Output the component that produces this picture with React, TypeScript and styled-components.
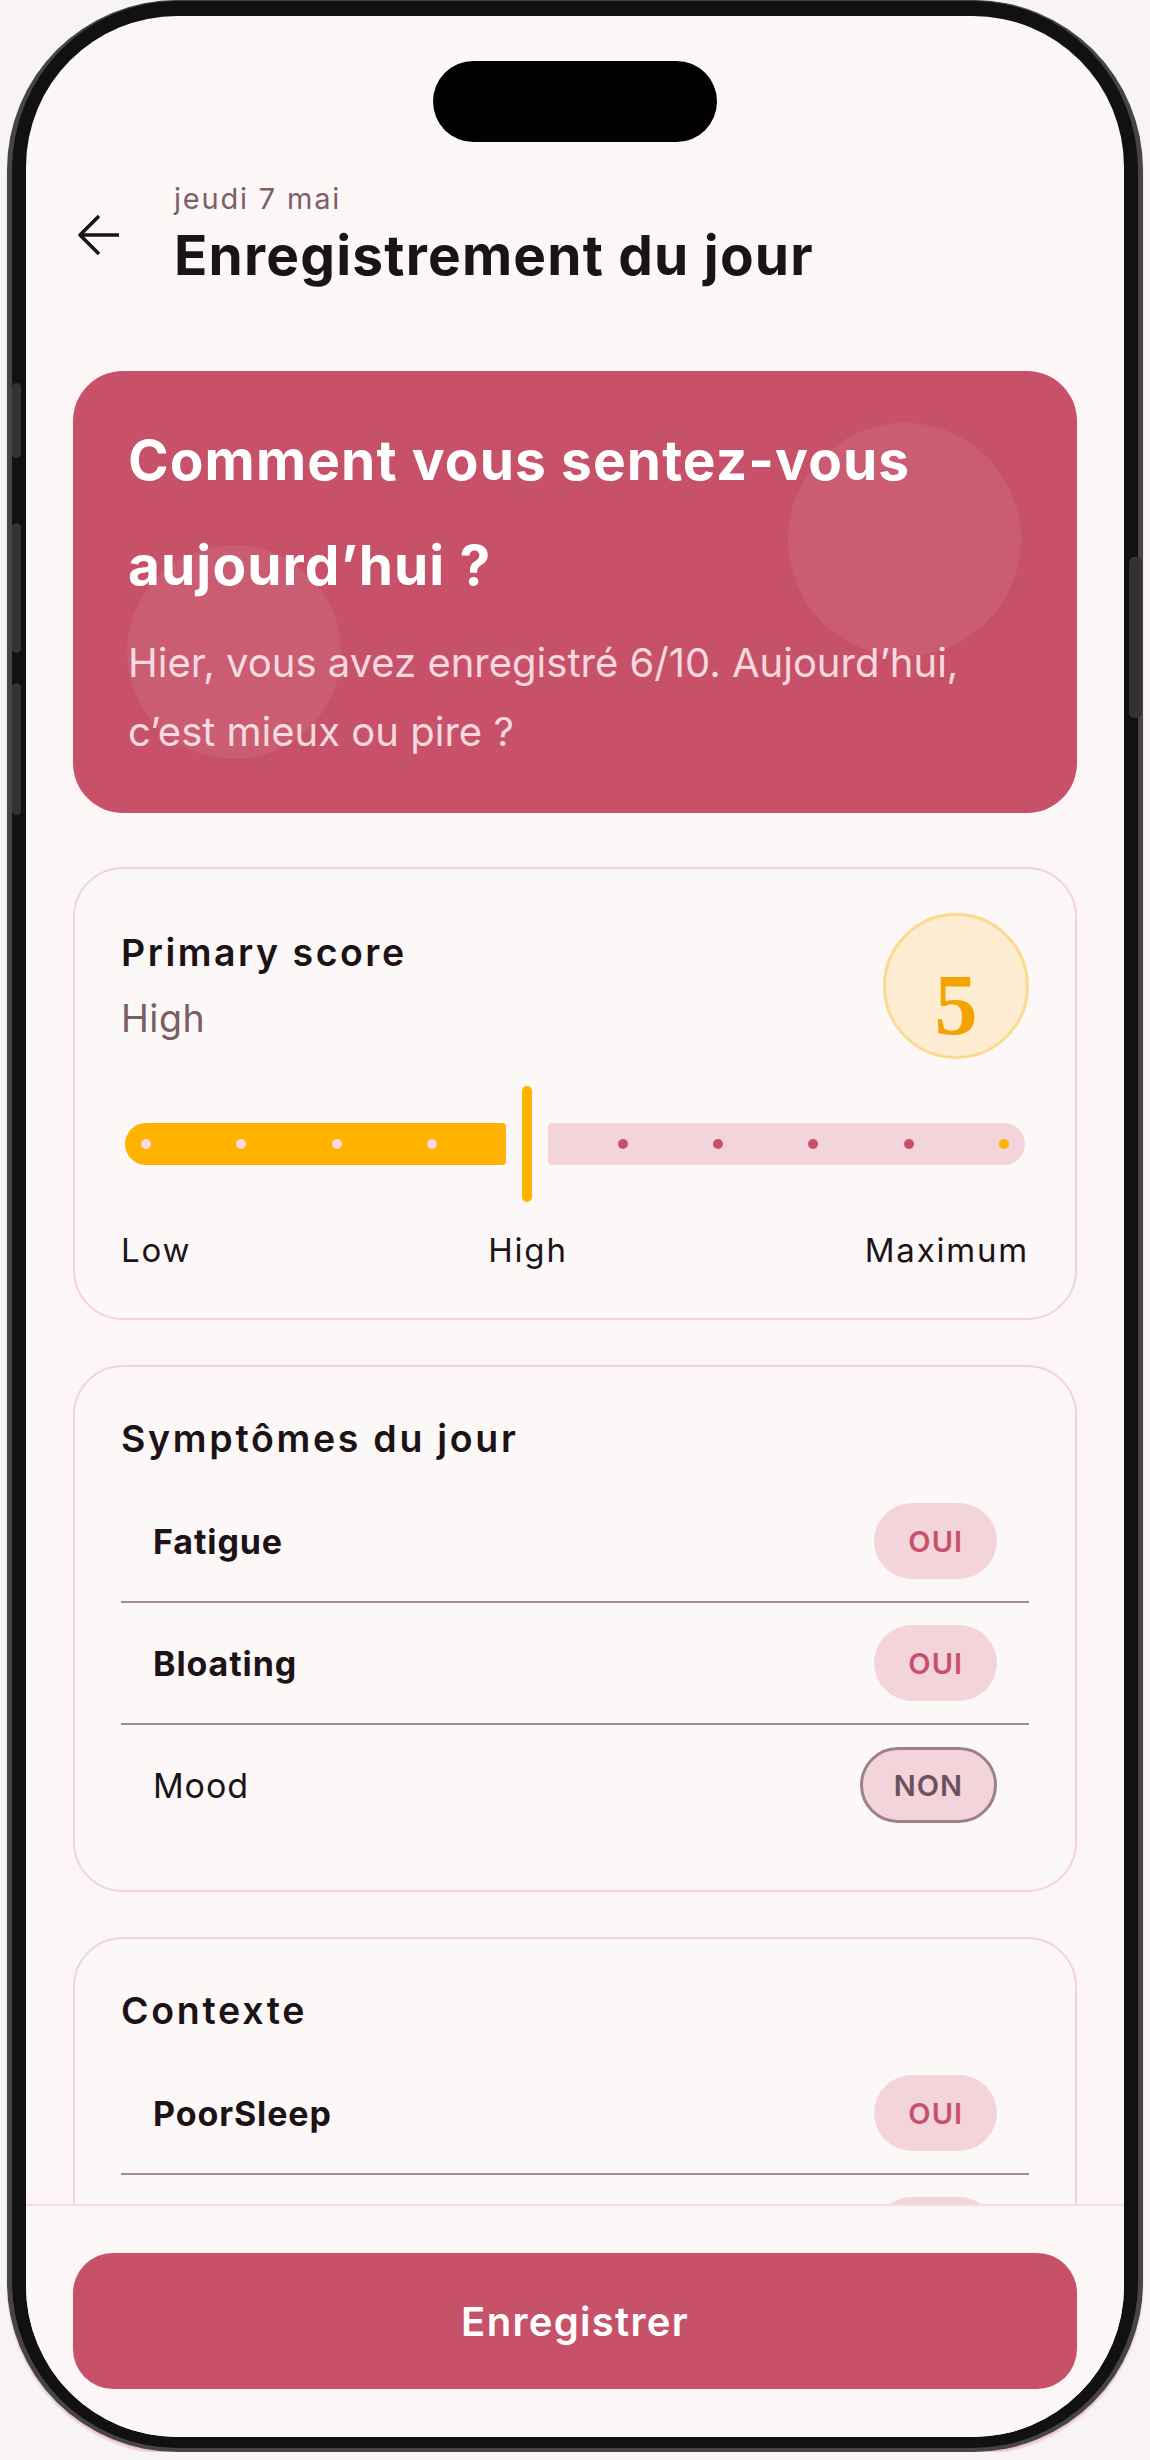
import styled, { createGlobalStyle } from "styled-components";

const GlobalStyle = createGlobalStyle`
  * { box-sizing: border-box; }
  body {
    margin: 0;
    background: #f8f4f5;
    font-family: Inter, "Noto Sans", sans-serif;
  }
`;

const Phone = styled.div`
  position: relative;
  width: 1136px;
  height: 2452px;
  margin: 0 auto;
  padding: 15px 14px 11px;
  background: #111;
  border: 5px solid #454545;
  border-top-width: 1px;
  border-bottom-width: 4px;
  border-radius: 170px;
  box-shadow: 0 3px 2px rgba(226, 160, 178, 0.55);
`;

const SideButton = styled.div<{ $side: "left" | "right"; $top: number; $h: number }>`
  position: absolute;
  ${(p) => (p.$side === "left" ? "left: 0; width: 9px;" : "right: -4px; width: 13px;")}
  top: ${(p) => p.$top}px;
  height: ${(p) => p.$h}px;
  background: #333;
  border-radius: 5px;
`;

const Screen = styled.div`
  position: relative;
  width: 100%;
  height: 100%;
  border-radius: 151px;
  overflow: hidden;
  background: #fcf6f7;
  display: flex;
  flex-direction: column;
`;

const Island = styled.div`
  position: absolute;
  top: 45px;
  left: 50%;
  transform: translateX(-50%);
  width: 284px;
  height: 81px;
  border-radius: 41px;
  background: #000;
  z-index: 5;
`;

const Scroll = styled.div`
  flex: 1;
  min-height: 0;
  overflow: hidden;
  padding: 165px 47px 0;
`;

const Header = styled.header`
  display: flex;
  align-items: center;
  gap: 49px;
`;

const BackButton = styled.button`
  width: 52px;
  height: 52px;
  padding: 0;
  border: none;
  background: none;
  display: flex;
  align-items: center;
  justify-content: center;
`;

const HeaderText = styled.div`
  display: flex;
  flex-direction: column;
`;

const DateLine = styled.span`
  font-size: 29px;
  line-height: 36px;
  letter-spacing: 1.8px;
  color: #7d5f69;
`;

const Title = styled.h1`
  margin: 5px 0 0;
  font-size: 55px;
  line-height: 66px;
  font-weight: 700;
  letter-spacing: 1.2px;
  color: #1c1317;
`;

const Stack = styled.div`
  display: flex;
  flex-direction: column;
  gap: 45px;
  margin-top: 83px;
`;

const Hero = styled.section`
  position: relative;
  overflow: hidden;
  background: #c75169;
  border-radius: 50px;
  padding: 37px 55px 47px;
  margin-bottom: 9px;
  color: #fff;
`;

const Blob = styled.div<{ $size: number; $top: number; $left: number }>`
  position: absolute;
  width: ${(p) => p.$size}px;
  height: ${(p) => p.$size}px;
  top: ${(p) => p.$top}px;
  left: ${(p) => p.$left}px;
  border-radius: 50%;
  background: rgba(255, 255, 255, 0.07);
`;

const HeroTitle = styled.h2`
  position: relative;
  margin: 0;
  font-size: 55px;
  line-height: 105px;
  font-weight: 700;
  letter-spacing: 1.1px;
`;

const HeroText = styled.p`
  position: relative;
  margin: 10px 0 0;
  font-size: 40px;
  line-height: 69px;
  color: rgba(255, 236, 240, 0.88);
`;

const Card = styled.section`
  background: #fdf8f8;
  border: 2px solid #f2d3da;
  border-radius: 50px;
  padding: 44px 46px 45px;
`;

const ScoreHead = styled.div`
  display: flex;
  justify-content: space-between;
  align-items: center;
`;

const CardTitle = styled.h3`
  margin: 0;
  font-size: 37.5px;
  line-height: 48px;
  font-weight: 600;
  letter-spacing: 2.5px;
  color: #1c1317;
`;

const ScoreLevel = styled.div`
  margin-top: 18px;
  font-size: 37.5px;
  line-height: 48px;
  letter-spacing: 0.5px;
  color: #7b5d67;
`;

const ScoreBadge = styled.div`
  width: 146px;
  height: 146px;
  border-radius: 50%;
  background: #fdebd2;
  border: 3px solid #fbd98f;
  padding-top: 38px;
  display: flex;
  align-items: center;
  justify-content: center;
  font-family: "Liberation Serif", serif;
  font-weight: 700;
  font-size: 86px;
  line-height: 1;
  color: #f5a300;
`;

const Track = styled.div`
  position: relative;
  height: 116px;
  margin: 27px 4px 0;
  display: flex;
  align-items: center;
`;

const Filled = styled.div`
  height: 42px;
  background: #ffb300;
  border-radius: 21px 4px 4px 21px;
`;

const ThumbSlot = styled.div`
  width: 42px;
  height: 100%;
  display: flex;
  justify-content: center;
`;

const Thumb = styled.div`
  width: 10px;
  height: 100%;
  border-radius: 5px;
  background: #ffb300;
`;

const Empty = styled.div`
  flex: 1;
  height: 42px;
  background: #f3d4db;
  border-radius: 4px 21px 21px 4px;
`;

const Dot = styled.span<{ $color: string }>`
  position: absolute;
  top: 50%;
  width: 10px;
  height: 10px;
  margin: -5px 0 0 -5px;
  border-radius: 50%;
  background: ${(p) => p.$color};
`;

const Scale = styled.div`
  display: flex;
  justify-content: space-between;
  margin-top: 25px;
  font-size: 33px;
  line-height: 46px;
  letter-spacing: 1.8px;
  color: #1c1317;
`;

const SectionTitle = styled(CardTitle)`
  margin: 0 0 14px;
  line-height: 56px;
  letter-spacing: 2.7px;
`;

const Row = styled.div`
  display: flex;
  justify-content: space-between;
  align-items: center;
  padding: 22px 32px;
  border-bottom: 2px solid #a38a95;
  &:last-child {
    border-bottom: none;
  }
`;

const RowLabel = styled.span<{ $on: boolean }>`
  font-size: 34px;
  font-weight: ${(p) => (p.$on ? 700 : 400)};
  letter-spacing: 0.9px;
  color: #1c1317;
`;

const Pill = styled.span<{ $on: boolean }>`
  height: 76px;
  padding: 0 31px;
  display: inline-flex;
  align-items: center;
  border-radius: 38px;
  border: 3px solid ${(p) => (p.$on ? "transparent" : "#9d808c")};
  background: #f3d4db;
  font-size: 29px;
  font-weight: 600;
  letter-spacing: 1px;
  color: ${(p) => (p.$on ? "#c75169" : "#6b5260")};
`;

const BottomBar = styled.div`
  flex-shrink: 0;
  border-top: 2px solid #f3dde2;
  background: #fcf6f7;
  padding: 47px 47px 48px;
`;

const SaveButton = styled.button`
  width: 100%;
  height: 136px;
  border: none;
  border-radius: 40px;
  background: #c75169;
  color: #fff;
  font-family: Inter, "Noto Sans", sans-serif;
  font-size: 40px;
  font-weight: 600;
  letter-spacing: 1.3px;
`;

const symptoms = [
  { name: "Fatigue", on: true },
  { name: "Bloating", on: true },
  { name: "Mood", on: false },
];

const context = [
  { name: "PoorSleep", on: true },
  { name: "Stress", on: true },
];

function ToggleRow({ name, on }: { name: string; on: boolean }) {
  return (
    <Row>
      <RowLabel $on={on}>{name}</RowLabel>
      <Pill $on={on}>{on ? "OUI" : "NON"}</Pill>
    </Row>
  );
}

function ScoreSlider({ value }: { value: number }) {
  const steps = 10;
  const idx = value - 1;
  const pos = (i: number) => `calc(21px + (100% - 42px) * ${i} / ${steps - 1})`;
  return (
    <Track>
      <Filled style={{ width: `calc((100% - 42px) * ${idx} / ${steps - 1})` }} />
      <ThumbSlot>
        <Thumb />
      </ThumbSlot>
      <Empty />
      {Array.from({ length: steps }).map((_, i) =>
        i === idx ? null : (
          <Dot
            key={i}
            style={{ left: pos(i) }}
            $color={i < idx ? "#fcd9e3" : i === steps - 1 ? "#ffb300" : "#c75169"}
          />
        )
      )}
    </Track>
  );
}

export default function App() {
  return (
    <>
      <GlobalStyle />
      <Phone>
        <SideButton $side="left" $top={382} $h={75} />
        <SideButton $side="left" $top={522} $h={130} />
        <SideButton $side="left" $top={682} $h={132} />
        <SideButton $side="right" $top={556} $h={161} />
        <Screen>
          <Island />
          <Scroll>
            <Header>
              <BackButton aria-label="Retour">
                <svg width="44" height="42" viewBox="0 0 44 42" fill="none">
                  <path
                    d="M42 21H3M22 2 3 21l19 19"
                    stroke="#1c1317"
                    strokeWidth="3.6"
                    strokeLinejoin="round"
                  />
                </svg>
              </BackButton>
              <HeaderText>
                <DateLine>jeudi 7 mai</DateLine>
                <Title>Enregistrement du jour</Title>
              </HeaderText>
            </Header>

            <Stack>
              <Hero>
                <Blob $size={233} $top={52} $left={715} />
                <Blob $size={214} $top={174} $left={54} />
                <HeroTitle>Comment vous sentez-vous aujourd’hui ?</HeroTitle>
                <HeroText>Hier, vous avez enregistré 6/10. Aujourd’hui, c’est mieux ou pire ?</HeroText>
              </Hero>

              <Card>
                <ScoreHead>
                  <div>
                    <CardTitle>Primary score</CardTitle>
                    <ScoreLevel>High</ScoreLevel>
                  </div>
                  <ScoreBadge>5</ScoreBadge>
                </ScoreHead>
                <ScoreSlider value={5} />
                <Scale>
                  <span>Low</span>
                  <span>High</span>
                  <span>Maximum</span>
                </Scale>
              </Card>

              <Card>
                <SectionTitle>Symptômes du jour</SectionTitle>
                {symptoms.map((s) => (
                  <ToggleRow key={s.name} name={s.name} on={s.on} />
                ))}
              </Card>

              <Card>
                <SectionTitle>Contexte</SectionTitle>
                {context.map((s) => (
                  <ToggleRow key={s.name} name={s.name} on={s.on} />
                ))}
              </Card>
            </Stack>
          </Scroll>
          <BottomBar>
            <SaveButton>Enregistrer</SaveButton>
          </BottomBar>
        </Screen>
      </Phone>
    </>
  );
}
